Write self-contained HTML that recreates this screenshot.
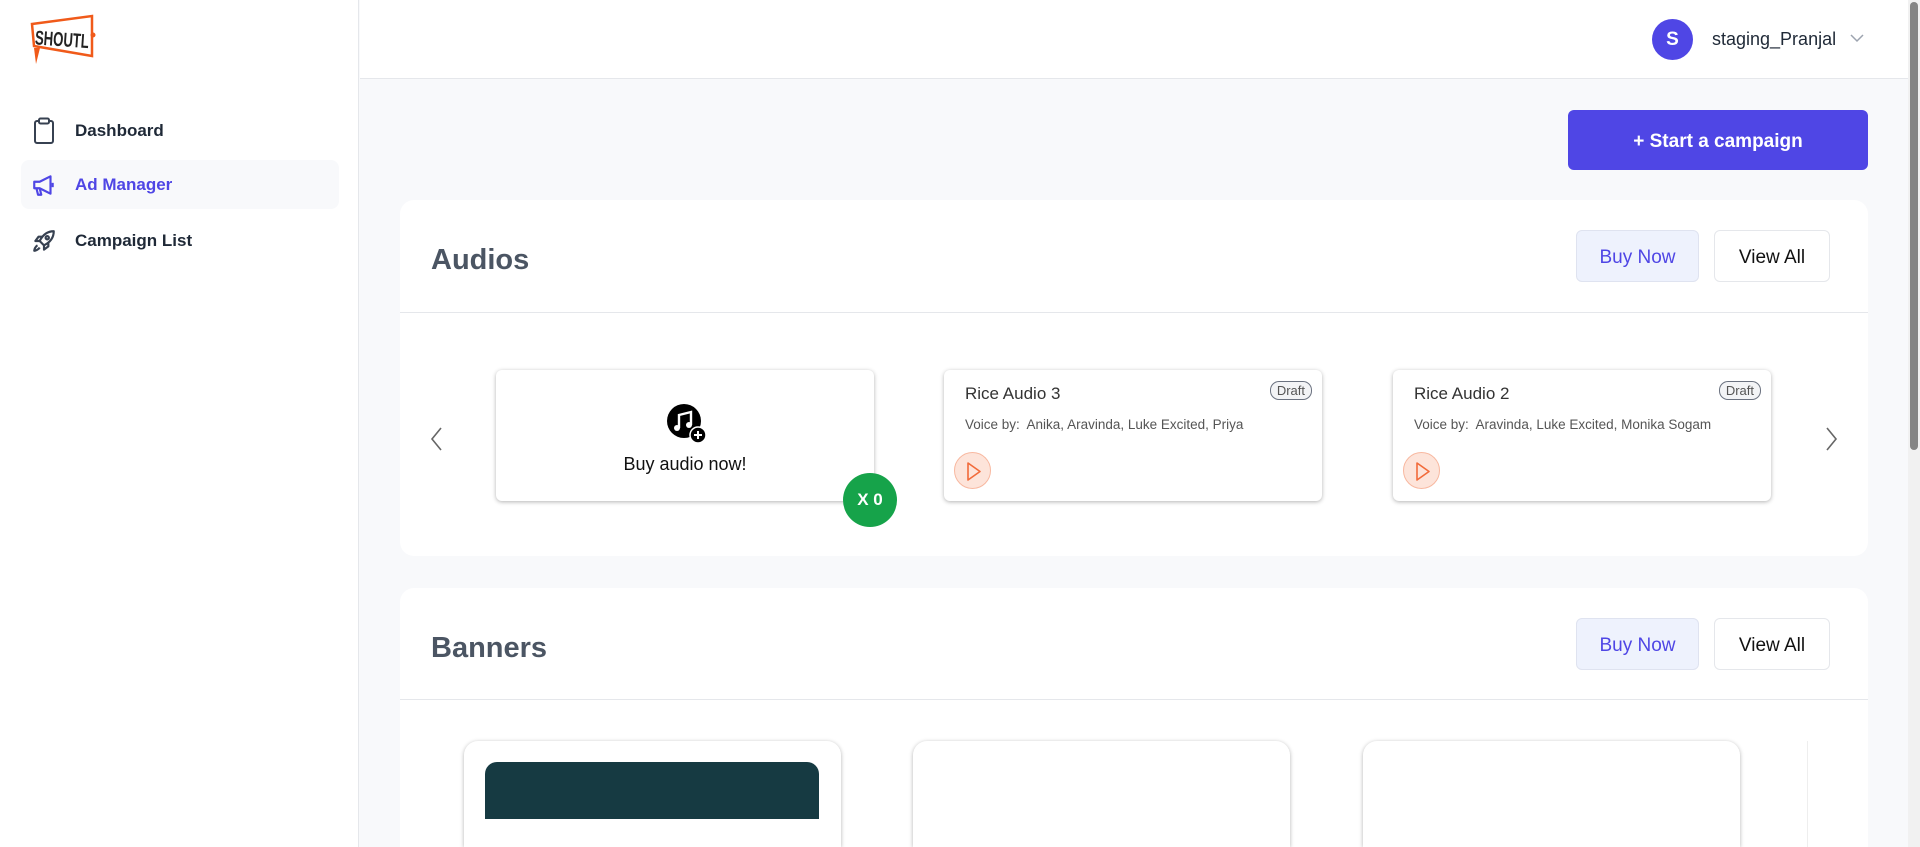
<!DOCTYPE html>
<html style="width:1920px;height:847px;overflow:hidden"><head><meta charset="utf-8"><style>
*{box-sizing:border-box;margin:0;padding:0}
body{width:1920px;height:847px;overflow:hidden;background:#f8f9fb;font-family:"Liberation Sans",sans-serif;position:relative;color:#374151}
.abs{position:absolute}
.side{left:0;top:0;width:359px;height:847px;background:#fff;border-right:1px solid #e5e7eb}
.nav{position:absolute;left:21px;width:318px;height:49px;border-radius:8px;display:flex;align-items:center;font-size:17px;color:#1f2937;font-weight:600}
.nav svg{position:absolute;left:10px}
.nav span{position:absolute;left:54px;top:15px}
.header{left:360px;top:0;width:1548px;height:79px;background:#fff;border-bottom:1px solid #e5e7eb}
.card{background:#fff;border-radius:14px}
.btn{position:absolute;height:52px;border-radius:6px;display:flex;align-items:center;justify-content:center;font-size:19px;padding-top:4px}
.ac{position:absolute;top:370px;width:378px;height:131px;background:#fff;border-radius:6px;box-shadow:0 1px 4px rgba(0,0,0,.3)}
.ttl{position:absolute;left:21px;top:14px;font-size:17px;color:#333}
.vb{position:absolute;left:21px;top:47px;font-size:13.5px;color:#555;white-space:nowrap;overflow:hidden;width:300px}
.draft{position:absolute;right:10px;top:11px;font-size:13px;border:1px solid #6b7280;border-radius:9px;padding:1px 6px;color:#555;background:#f3f4f6}
.play{position:absolute;left:10px;top:82px;width:37px;height:37px;border-radius:50%;background:#fde4da;border:1px solid #f8b8a0}
.bc{position:absolute;top:741px;width:377px;height:106px;background:#fff;border-radius:14px 14px 0 0;box-shadow:0 1px 4px rgba(0,0,0,.3)}
</style></head><body>
<div class="abs side">
  <svg class="abs" style="left:28px;top:14px" width="72" height="52" viewBox="0 0 72 52">
    <path d="M4 10 L64 2 L64 42 L6 32 Z" fill="#fff" stroke="#f05a1a" stroke-width="2.5"/>
    <path d="M6 34 L12 34 L8 50 Z" fill="#f05a1a"/>
    <circle cx="65" cy="21" r="2.5" fill="#f05a1a"/>
    <text x="7" y="32" font-family="Liberation Sans" font-weight="bold" font-size="20" fill="#222" textLength="54" lengthAdjust="spacingAndGlyphs" transform="rotate(4 30 25)">SHOUTL</text>
  </svg>
  <div class="nav" style="top:106px"><svg width="26" height="28" viewBox="0 0 26 28" fill="none" stroke="#374151" stroke-width="2"><rect x="4" y="4" width="18" height="22" rx="2"/><rect x="8" y="1.5" width="10" height="5" rx="1.5" fill="#fff"/></svg><span>Dashboard</span></div>
  <div class="nav" style="top:160px;background:#f8f9fb;color:#4f46e5"><svg width="26" height="26" viewBox="0 0 24 24" fill="none" stroke="#4f46e5" stroke-width="2" stroke-linejoin="round"><path d="M3 9h5l10-5v16l-10-5H3z"/><path d="M5 15l1.5 6h3L8 15"/><path d="M20 10v4"/></svg><span>Ad Manager</span></div>
  <div class="nav" style="top:216px"><svg width="26" height="26" viewBox="0 0 24 24" fill="none" stroke="#374151" stroke-width="2" stroke-linejoin="round"><path d="M21 3c-6 0-10 3-13 9l4 4c6-3 9-7 9-13z"/><circle cx="15" cy="9" r="1.5"/><path d="M8 12H4l3-4h4M12 16v4l4-3v-4"/><path d="M6 16c-2 1-3 4-3 5 1 0 4-1 5-3"/></svg><span>Campaign List</span></div>
</div>
<div class="abs header">
  <div class="abs" style="left:1292px;top:19px;width:41px;height:41px;border-radius:50%;background:#4f46e5;color:#fff;font-weight:bold;font-size:19px;display:flex;align-items:center;justify-content:center">S</div>
  <div class="abs" style="left:1352px;top:29px;font-size:18px;color:#1f2937">staging_Pranjal</div>
  <svg class="abs" style="left:1489px;top:33px" width="16" height="10" viewBox="0 0 16 10"><path d="M2 2l6 6 6-6" fill="none" stroke="#9ca3af" stroke-width="1.5"/></svg>
</div>
<div class="abs" style="left:1908px;top:0;width:12px;height:847px;background:#f1f1f1"><div style="margin:2px 2px;width:8px;height:448px;background:#858585;border-radius:4px"></div></div>
<div class="btn" style="left:1568px;top:110px;width:300px;height:60px;background:#4f46e5;color:#fff;font-weight:bold;font-size:19px;border-radius:6px">+ Start a campaign</div>

<div class="abs card" style="left:400px;top:200px;width:1468px;height:356px">
  <div class="abs" style="left:31px;top:44px;font-size:29px;color:#4b5563;font-weight:bold">Audios</div>
  <div class="btn" style="left:1176px;top:30px;width:123px;background:#eef2fd;border:1px solid #dfe3f0;color:#4f46e5">Buy Now</div>
  <div class="btn" style="left:1314px;top:30px;width:116px;background:#fff;border:1px solid #e5e7eb;color:#111">View All</div>
  <div class="abs" style="left:0;top:112px;width:1468px;height:1px;background:#e5e7eb"></div>
  <svg class="abs" style="left:29px;top:226px" width="14" height="26" viewBox="0 0 14 26"><path d="M12 2L3 13l9 11" fill="none" stroke="#666" stroke-width="1.6"/></svg>
  <svg class="abs" style="left:1425px;top:226px" width="14" height="26" viewBox="0 0 14 26"><path d="M2 2l9 11-9 11" fill="none" stroke="#666" stroke-width="1.6"/></svg>
</div>
<div class="ac" style="left:496px">
  <svg class="abs" style="left:170px;top:33px" width="42" height="42" viewBox="0 0 42 42"><circle cx="18" cy="18" r="17" fill="#000"/><path d="M13 25V12l12-3v13" fill="none" stroke="#fff" stroke-width="2.4"/><circle cx="11" cy="25" r="3" fill="#fff"/><circle cx="23" cy="22" r="3" fill="#fff"/><circle cx="32" cy="32" r="8" fill="#000" stroke="#fff" stroke-width="1.5"/><path d="M32 28v8M28 32h8" stroke="#fff" stroke-width="2"/></svg>
  <div class="abs" style="left:0;width:100%;top:84px;text-align:center;font-size:18px;color:#111">Buy audio now!</div>
  <div class="abs" style="left:347px;top:103px;width:54px;height:54px;border-radius:50%;background:#16a34a;color:#fff;font-weight:bold;font-size:17px;display:flex;align-items:center;justify-content:center">X 0</div>
</div>
<div class="ac" style="left:944px"><div class="ttl">Rice Audio 3</div><div class="draft">Draft</div><div class="vb">Voice by:&nbsp; Anika, Aravinda, Luke Excited, Priya</div><div class="play"><svg width="37" height="37" viewBox="0 0 37 37"><path d="M13 10l12 8.5-12 8.5z" fill="none" stroke="#f26b3a" stroke-width="1.6" stroke-linejoin="round"/></svg></div></div>
<div class="ac" style="left:1393px"><div class="ttl">Rice Audio 2</div><div class="draft">Draft</div><div class="vb">Voice by:&nbsp; Aravinda, Luke Excited, Monika Sogam</div><div class="play"><svg width="37" height="37" viewBox="0 0 37 37"><path d="M13 10l12 8.5-12 8.5z" fill="none" stroke="#f26b3a" stroke-width="1.6" stroke-linejoin="round"/></svg></div></div>

<div class="abs card" style="left:400px;top:588px;width:1468px;height:259px;border-radius:14px 14px 0 0">
  <div class="abs" style="left:31px;top:44px;font-size:29px;color:#4b5563;font-weight:bold">Banners</div>
  <div class="btn" style="left:1176px;top:30px;width:123px;background:#eef2fd;border:1px solid #dfe3f0;color:#4f46e5">Buy Now</div>
  <div class="btn" style="left:1314px;top:30px;width:116px;background:#fff;border:1px solid #e5e7eb;color:#111">View All</div>
  <div class="abs" style="left:0;top:111px;width:1468px;height:1px;background:#e5e7eb"></div>
  <div class="abs" style="left:1407px;top:153px;width:1px;height:106px;background:#eee"></div>
</div>
<div class="bc" style="left:464px"><div class="abs" style="left:21px;top:21px;width:334px;height:57px;background:#163a42;border-radius:12px 12px 0 0"></div></div>
<div class="bc" style="left:913px"></div>
<div class="bc" style="left:1363px"></div>
</body></html>
